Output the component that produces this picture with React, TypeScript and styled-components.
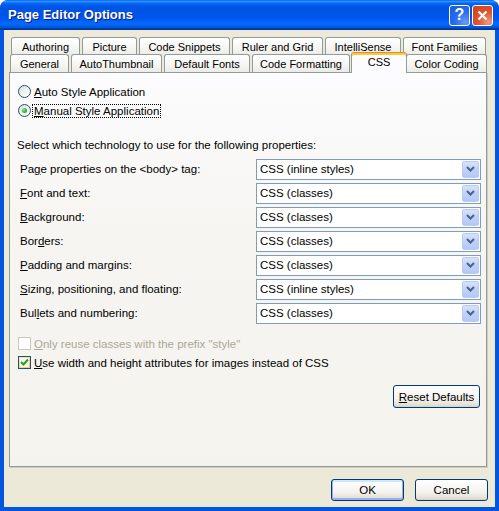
import React from "react"
import styled, { createGlobalStyle, css } from "styled-components"

const GlobalStyle = createGlobalStyle`
    html, body {
        margin: 0;
        padding: 0;
        background: #ffffff;
    }
    body {
        font-family: "Liberation Sans", Arial, sans-serif;
        font-size: 11.5px;
        color: #000000;
    }
`

interface TabInfo {
    label: string;
    width: number;
    active?: boolean;
}

const backTabs: TabInfo[] = [
    { label: "Authoring", width: 69 },
    { label: "Picture", width: 55 },
    { label: "Code Snippets", width: 91 },
    { label: "Ruler and Grid", width: 91 },
    { label: "IntelliSense", width: 76 },
    { label: "Font Families", width: 83 },
]

const frontTabs: TabInfo[] = [
    { label: "General", width: 59 },
    { label: "AutoThumbnail", width: 91 },
    { label: "Default Fonts", width: 86 },
    { label: "Code Formatting", width: 98 },
    { label: "CSS", width: 56, active: true },
    { label: "Color Coding", width: 81 },
]

interface PropRow {
    label: React.ReactNode;
    value: string;
}

const propRows: PropRow[] = [
    { label: <>Pa<u>g</u>e properties on the &lt;body&gt; tag:</>, value: "CSS (inline styles)" },
    { label: <><u>F</u>ont and text:</>, value: "CSS (classes)" },
    { label: <><u>B</u>ackground:</>, value: "CSS (classes)" },
    { label: <>Bor<u>d</u>ers:</>, value: "CSS (classes)" },
    { label: <><u>P</u>adding and margins:</>, value: "CSS (classes)" },
    { label: <><u>S</u>izing, positioning, and floating:</>, value: "CSS (inline styles)" },
    { label: <>Bul<u>l</u>ets and numbering:</>, value: "CSS (classes)" },
]

const Chevron = () => (
    <svg width="9" height="6" viewBox="0 0 9 6">
        <path d="M1 1 L4.5 4.5 L8 1" fill="none" stroke="#4d6185" strokeWidth="2" />
    </svg>
)

const CheckMark = () => (
    <svg width="9" height="9" viewBox="0 0 9 9">
        <path d="M1 4 L3.5 6.5 L8 1.5" fill="none" stroke="#21a121" strokeWidth="2" />
    </svg>
)

export default function App() {
    return (
        <>
            <GlobalStyle />
            <Window>
                <TitleBar>
                    <TitleText>Page Editor Options</TitleText>
                    <CaptionButton $kind="help">?</CaptionButton>
                    <CaptionButton $kind="close">
                        <svg width="11" height="11" viewBox="0 0 11 11">
                            <path d="M1.5 1.5 L9.5 9.5 M9.5 1.5 L1.5 9.5" stroke="#ffffff" strokeWidth="2.2" />
                        </svg>
                    </CaptionButton>
                </TitleBar>
                <Body>
                    <TabRow $offset={2}>
                        {backTabs.map(tab => (
                            <Tab key={tab.label} $width={tab.width}>{tab.label}</Tab>
                        ))}
                    </TabRow>
                    <TabRow $offset={1} $front>
                        {frontTabs.map(tab => (
                            <Tab key={tab.label} $width={tab.width} $active={tab.active}>{tab.label}</Tab>
                        ))}
                    </TabRow>
                    <Panel>
                        <OptionRow>
                            <Radio />
                            <span><u>A</u>uto Style Application</span>
                        </OptionRow>
                        <OptionRow>
                            <Radio $checked />
                            <Focused><u>M</u>anual Style Application</Focused>
                        </OptionRow>
                        <Intro>Select which technology to use for the following properties:</Intro>
                        <PropGrid>
                            {propRows.map((row, i) => (
                                <React.Fragment key={i}>
                                    <PropLabel>{row.label}</PropLabel>
                                    <Combo>
                                        <ComboText>{row.value}</ComboText>
                                        <ComboButton><Chevron /></ComboButton>
                                    </Combo>
                                </React.Fragment>
                            ))}
                        </PropGrid>
                        <CheckGroup>
                            <CheckRow $disabled>
                                <CheckBox $disabled />
                                <span><u>O</u>nly reuse classes with the prefix "style"</span>
                            </CheckRow>
                            <CheckRow>
                                <CheckBox $hot><CheckMark /></CheckBox>
                                <span><u>U</u>se width and height attributes for images instead of CSS</span>
                            </CheckRow>
                        </CheckGroup>
                        <ResetButton><u>R</u>eset Defaults</ResetButton>
                    </Panel>
                    <Footer>
                        <Button $default>OK</Button>
                        <Button>Cancel</Button>
                    </Footer>
                </Body>
            </Window>
        </>
    )
}

const Window = styled.div`
    width: 499px;
    height: 511px;
    display: flex;
    flex-direction: column;
    overflow: hidden;
    border-radius: 8px 8px 0 0;
    background: #0a4fe3;
`

const TitleBar = styled.div`
    height: 30px;
    flex: none;
    display: flex;
    align-items: center;
    gap: 2px;
    padding: 0 6px 0 8px;
    box-sizing: border-box;
    border-radius: 8px 8px 0 0;
    background: linear-gradient(to bottom,
        #0058ee 0%, #3593ff 4%, #288eff 6%, #127dff 8%, #036ffc 10%,
        #0262ee 14%, #0057e5 20%, #0054e3 24%, #0055eb 56%, #005bf5 66%,
        #026afe 76%, #0062ef 86%, #0052d6 92%, #0040ab 95%, #003092 100%);
`

const TitleText = styled.div`
    flex: 1;
    color: #ffffff;
    font-family: "Liberation Sans", Arial, sans-serif;
    font-weight: bold;
    font-size: 13px;
    text-shadow: 1px 1px 0 #0a1883;
    padding-bottom: 1px;
`

const CaptionButton = styled.div<{ $kind: "help" | "close" }>`
    width: 21px;
    height: 21px;
    box-sizing: border-box;
    border: 1px solid #ffffff;
    border-radius: 3px;
    display: flex;
    align-items: center;
    justify-content: center;
    color: #ffffff;
    font-family: "Liberation Sans", Arial, sans-serif;
    font-weight: bold;
    font-size: 16px;
    ${p => p.$kind === "help" ? css`
        background: radial-gradient(circle at 80% 85%, #6a9cf7 0%, #2b6df0 45%, #1b58d8 100%);
    ` : css`
        background: radial-gradient(circle at 80% 85%, #f29a7a 0%, #e0552e 45%, #c8401c 100%);
    `}
`

const Body = styled.div`
    flex: 1;
    display: flex;
    flex-direction: column;
    background: #ece9d8;
    border-style: solid;
    border-color: #0553e1;
    border-width: 0 4px 4px 4px;
    padding: 7px 8px 6px 5px;
    min-height: 0;
`

const TabRow = styled.div<{ $offset: number; $front?: boolean }>`
    display: flex;
    align-items: flex-end;
    height: 18px;
    padding-left: ${p => p.$offset}px;
    margin-top: ${p => p.$front ? "-1px" : "0"};
    position: relative;
    z-index: ${p => p.$front ? 2 : 1};
`

const Tab = styled.div<{ $width: number; $active?: boolean }>`
    width: ${p => p.$width}px;
    height: 18px;
    box-sizing: border-box;
    flex: none;
    margin-right: 2px;
    border: 1px solid #919b9c;
    border-bottom: none;
    border-radius: 3px 3px 0 0;
    background: linear-gradient(to bottom, #ffffff 0%, #f7f7f4 50%, #ecebe5 100%);
    display: flex;
    align-items: center;
    justify-content: center;
    white-space: nowrap;
    font-size: 11px;
    padding-top: 1px;
    ${p => p.$active && css`
        height: 21px;
        margin-left: -1px;
        margin-right: -1px;
        margin-bottom: -1px;
        border-top: 1px solid #e68b2c;
        box-shadow: inset 0 2px 0 #ffc73c;
        background: #fcfcfe;
        align-items: flex-start;
        padding-top: 3px;
        position: relative;
        z-index: 3;
    `}
`

const Panel = styled.div`
    flex: 1;
    display: flex;
    flex-direction: column;
    border: 1px solid #919b9c;
    box-shadow: 1px 1px 0 #d0cdbf;
    background: linear-gradient(to bottom, #fcfcfe 0%, #f6f5f1 40%, #f4f3ee 100%);
    padding: 9px 5px 0 8px;
    position: relative;
    z-index: 1;
`

const OptionRow = styled.div`
    height: 19px;
    display: flex;
    align-items: center;
    gap: 3px;
`

const Radio = styled.div<{ $checked?: boolean }>`
    width: 13px;
    height: 13px;
    box-sizing: border-box;
    border-radius: 50%;
    border: 1px solid #1c5180;
    background: linear-gradient(135deg, #dcdcd7 0%, #f2f2ee 50%, #ffffff 100%);
    display: flex;
    align-items: center;
    justify-content: center;
    flex: none;
    &::after {
        content: "";
        display: ${p => p.$checked ? "block" : "none"};
        width: 5px;
        height: 5px;
        border-radius: 50%;
        background: radial-gradient(circle at 35% 35%, #8de28d 0%, #2fb22f 60%, #1a8a1a 100%);
    }
`

const Focused = styled.span`
    outline: 1px dotted #000000;
    outline-offset: 0px;
    padding: 0 1px;
    margin-left: -1px;
`

const Intro = styled.div`
    margin: 18px 0 0 -1px;
    height: 14px;
    line-height: 14px;
`

const PropGrid = styled.div`
    display: grid;
    grid-template-columns: 1fr 225px;
    grid-auto-rows: 24px;
    align-items: center;
    margin-top: 5px;
`

const PropLabel = styled.div`
    padding-left: 2px;
    white-space: nowrap;
`

const Combo = styled.div`
    height: 21px;
    box-sizing: border-box;
    border: 1px solid #7f9db9;
    background: #ffffff;
    display: flex;
    align-items: center;
    padding: 0 1px 0 3px;
`

const ComboText = styled.span`
    flex: 1;
`

const ComboButton = styled.div`
    width: 17px;
    height: 17px;
    box-sizing: border-box;
    border: 1px solid #b9cbf3;
    border-radius: 2px;
    background: linear-gradient(to bottom, #d6e2fc 0%, #c1d3fb 45%, #b4c8f6 100%);
    display: flex;
    align-items: center;
    justify-content: center;
`

const CheckGroup = styled.div`
    display: flex;
    flex-direction: column;
    margin-top: 9px;
`

const CheckRow = styled.div<{ $disabled?: boolean }>`
    height: 19px;
    display: flex;
    align-items: center;
    gap: 2px;
    color: ${p => p.$disabled ? "#aca899" : "#000000"};
`

const CheckBox = styled.div<{ $disabled?: boolean; $hot?: boolean }>`
    width: 13px;
    height: 13px;
    box-sizing: border-box;
    flex: none;
    display: flex;
    align-items: center;
    justify-content: center;
    margin-right: 1px;
    border: 1px solid ${p => p.$disabled ? "#cac8bb" : "#1c5180"};
    background: ${p => p.$disabled
        ? "#ffffff"
        : p.$hot
            ? "linear-gradient(135deg, #fce8a8 0%, #f8c55c 100%)"
            : "linear-gradient(135deg, #dcdcd7 0%, #ffffff 100%)"};
    ${p => p.$hot && css`
        & > svg {
            background: #f9f8f4;
        }
    `}
`

const buttonStyle = css`
    height: 23px;
    box-sizing: border-box;
    border: 1px solid #003c74;
    border-radius: 3px;
    background: linear-gradient(to bottom, #ffffff 0%, #f4f3ee 60%, #e3e1d5 90%, #d6d0c5 100%);
    display: flex;
    align-items: center;
    justify-content: center;
    font-family: "Liberation Sans", Arial, sans-serif;
    font-size: 11.5px;
    color: #000000;
`

const ResetButton = styled.div`
    ${buttonStyle}
    width: 87px;
    align-self: flex-end;
    margin: 13px 1px 0 0;
`

const Footer = styled.div`
    display: flex;
    justify-content: flex-end;
    gap: 11px;
    margin: 12px -1px 0 0;
`

const Button = styled.div<{ $default?: boolean }>`
    ${buttonStyle}
    width: 73px;
    height: 22px;
    ${p => p.$default && css`
        box-shadow: inset 0 -1px 0 1px #97aef6, inset 0 1px 0 1px #cee7ff;
    `}
`
